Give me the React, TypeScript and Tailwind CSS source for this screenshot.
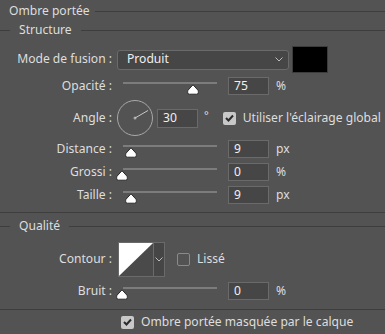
import type { ReactNode } from "react";

const font = { fontFamily: '"Segoe UI", "Noto Sans", sans-serif' };

export default function App() {
  return (
    <div className="h-[334px] w-[385px] overflow-hidden whitespace-nowrap bg-[#535353] text-[12.1px] leading-none text-[#dedede]" style={font}>
      <SectionTitle label="Ombre portée" leftLine={false} className="h-[22px]" />
      <SectionTitle label="Structure" className="h-[16px]" />

      <Row label="Mode de fusion :" className="mt-[8px] h-[27px]">
        <div className="flex h-[20px] w-[172px] items-center justify-between rounded-[3px] border border-[#6a6a6a] bg-[#464646] pl-[9px] pr-[5px] text-[#f0f0f0]">
          <span>Produit</span>
          <Chevron />
        </div>
        <div className="ml-[3px] h-[27px] w-[36px] border border-[#3c3c3c] bg-black" />
      </Row>

      <Row label="Opacité :" className="mt-[4px] h-[18px]">
        <Slider thumb={193} />
        <NumberBox value="75" />
        <span className="ml-[7px]">%</span>
      </Row>

      <Row label="Angle :" className="mt-[5px] h-[36px]">
        <AngleDial />
        <div className="ml-[4px] flex h-[19px] w-[41px] items-center border border-[#6a6a6a] bg-[#464646] pl-[5px] text-[#f0f0f0]">30</div>
        <span className="ml-[6px] self-start pt-[9px] text-[11px]">°</span>
        <Checkbox checked className="ml-[14px]" />
        <span className="ml-[7px]">Utiliser l'éclairage global</span>
      </Row>

      <Row label="Distance :" className="mt-[4px] h-[18px]">
        <Slider thumb={131} />
        <NumberBox value="9" />
        <span className="ml-[7px]">px</span>
      </Row>
      <Row label="Grossi :" className="mt-[5px] h-[18px]">
        <Slider thumb={122} />
        <NumberBox value="0" />
        <span className="ml-[7px]">%</span>
      </Row>
      <Row label="Taille :" className="mt-[5px] h-[18px]">
        <Slider thumb={131} />
        <NumberBox value="9" />
        <span className="ml-[7px]">px</span>
      </Row>

      <div className="mt-[8px] h-px bg-[#3e3e3e]" />
      <SectionTitle label="Qualité" className="h-[26px]" />

      <Row label="Contour :" className="mt-[3px] h-[35px]">
        <div className="ml-[1px] flex h-[35px] w-[47px] border border-[#6a6a6a] bg-[#464646]">
          <svg width="34" height="33" viewBox="0 0 34 33" className="block">
            <rect width="34" height="33" fill="#4a4a4a" />
            <polygon points="0,0 34,0 0,33" fill="#ffffff" />
          </svg>
          <div className="flex flex-1 items-center justify-center border-l border-[#6a6a6a]">
            <Chevron />
          </div>
        </div>
        <Checkbox className="ml-[12px]" />
        <span className="ml-[7px]">Lissé</span>
      </Row>

      <Row label="Bruit :" className="mt-[5px] h-[18px]">
        <Slider thumb={122} />
        <NumberBox value="0" />
        <span className="ml-[7px]">%</span>
      </Row>

      <div className="mt-[9px] h-px bg-[#3e3e3e]" />
      <div className="mt-[6px] flex h-[12px] items-center pl-[121px]">
        <Checkbox checked />
        <span className="ml-[7px]">Ombre portée masquée par le calque</span>
      </div>
    </div>
  );
}

function SectionTitle({ label, leftLine = true, className = "" }: { label: string; leftLine?: boolean; className?: string }) {
  return (
    <div className={`flex items-center ${className}`}>
      {leftLine ? <div className="h-px w-[10px] bg-[#3e3e3e]" /> : <div className="w-[9px]" />}
      <span className={leftLine ? "px-[9px]" : "pr-[5px]"}>{label}</span>
      <div className="h-px flex-1 bg-[#3e3e3e]" />
    </div>
  );
}

function Row({ label, className = "", children }: { label: string; className?: string; children: ReactNode }) {
  return (
    <div className={`flex items-center ${className}`}>
      <div className="w-[112px] shrink-0 text-right">{label}</div>
      <div className="ml-[5px] flex h-full items-center">{children}</div>
    </div>
  );
}

function NumberBox({ value }: { value: string }) {
  return (
    <div className="ml-[5px] flex h-[18px] w-[41px] items-center border border-[#6a6a6a] bg-[#464646] pl-[5px] text-[#f0f0f0]">
      {value}
    </div>
  );
}

// thumb = absolute x of thumb centre in the page
function Slider({ thumb }: { thumb: number }) {
  return (
    <div className="relative h-full w-[106px]">
      <div className="absolute left-[6px] top-[5px] h-[2px] w-[94px] bg-[#7c7c7c]" />
      <svg
        width="12"
        height="11"
        viewBox="0 0 12 11"
        className="absolute top-[7px]"
        style={{ left: thumb - 117 - 6 }}
      >
        <path d="M6 0.8 L10.8 6 Q11.3 6.6 11.3 7.4 L11.3 8.6 Q11.3 10.2 9.7 10.2 L2.3 10.2 Q0.7 10.2 0.7 8.6 L0.7 7.4 Q0.7 6.6 1.2 6 Z" fill="#ffffff" stroke="#2a2a2a" strokeWidth="1" />
      </svg>
    </div>
  );
}

function AngleDial() {
  return (
    <svg width="36" height="36" viewBox="0 0 36 36" className="block">
      <circle cx="18" cy="18" r="17.5" fill="none" stroke="#a8a8a8" strokeWidth="1" />
      <circle cx="18" cy="18" r="1.5" fill="#a8a8a8" />
      <line x1="18" y1="18" x2="31" y2="10.5" stroke="#c8c8c8" strokeWidth="1" />
    </svg>
  );
}

function Chevron() {
  return (
    <svg width="8" height="5" viewBox="0 0 8 5" className="block">
      <path d="M0.5 0.5 L4 4 L7.5 0.5" fill="none" stroke="#bdbdbd" strokeWidth="1" />
    </svg>
  );
}

function Checkbox({ checked = false, className = "" }: { checked?: boolean; className?: string }) {
  return (
    <div
      className={`flex h-[13px] w-[13px] shrink-0 items-center justify-center rounded-[2px] ${
        checked ? "bg-[#c8c8c8]" : "border border-[#8a8a8a]"
      } ${className}`}
    >
      {checked ? (
        <svg width="9" height="8" viewBox="0 0 9 8" className="block">
          <path d="M1 4 L3.5 6.5 L8 1.5" fill="none" stroke="#2b2b2b" strokeWidth="2" />
        </svg>
      ) : null}
    </div>
  );
}
